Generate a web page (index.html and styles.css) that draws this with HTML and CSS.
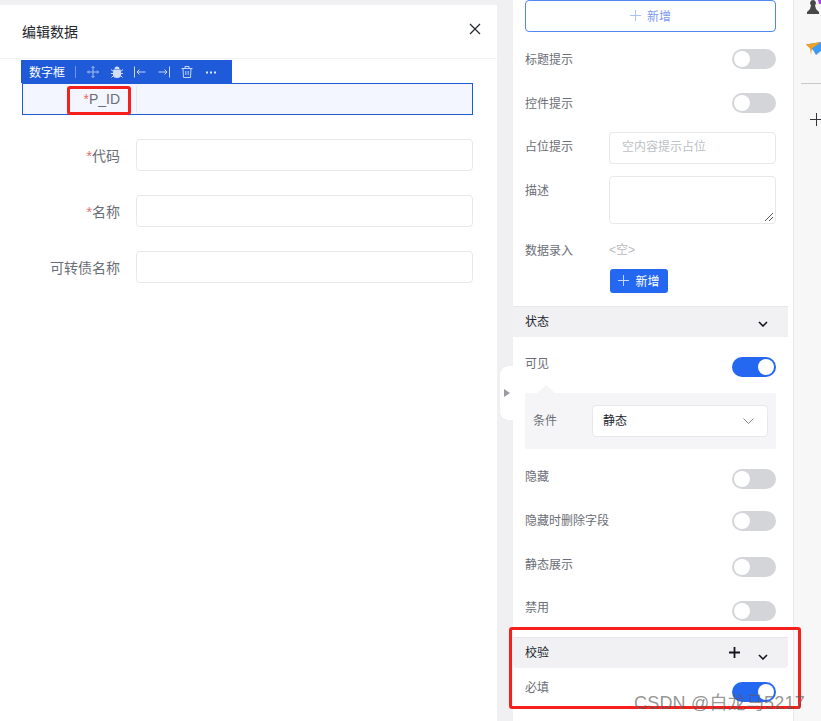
FILE: index.html
```html
<!DOCTYPE html>
<html lang="en">
<head>
    <meta charset="UTF-8">
    <title>编辑数据</title>
    <link rel="stylesheet" href="styles.css">
</head>
<body>
    <div class="dialog">
        <div class="dialog-head">
            <span class="dialog-title">编辑数据</span>
            <svg class="close" width="12" height="12" viewBox="0 0 12 12"><path d="M1 1l10 10M11 1L1 11" stroke="#22252c" stroke-width="1.2" fill="none"/></svg>
        </div>
        <div class="form">
            <div class="form-row selected">
                <div class="toolbar">
                    <span class="toolbar-name">数字框</span>
                    <span class="toolbar-sep"></span>
                    <svg width="12" height="12" viewBox="0 0 12 12"><path d="M6 .5v11M.5 6h11M4.500 2L6 .5 7.500 2M4.500 10L6 11.500 7.500 10M2 4.500L.5 6 2 7.500M10 4.500L11.500 6 10 7.500" stroke="#a9c0f0" fill="none"/></svg>
                    <svg width="12" height="12" viewBox="0 0 12 12"><path d="M3.500 3a2.500 2.500 0 0 1 5 0zM2.500 3.500h7l.5 2V9a4 3 0 0 1-8 0V5.500z" fill="#d3dff8"/><path d="M0 3.500l2.500 2M12 3.500l-2.500 2M0 7.500h2.500M12 7.500H9.500M.5 11.500L3 9M11.500 11.500L9 9" stroke="#d3dff8" fill="none"/></svg>
                    <svg width="12" height="12" viewBox="0 0 12 12"><path d="M.5 .5v11M11.500 6H3M5.500 3.500L3 6l2.500 2.500" stroke="#c5d5f5" fill="none"/></svg>
                    <svg width="12" height="12" viewBox="0 0 12 12"><path d="M11.500 .5v11M.5 6H9M6.500 3.500L9 6l-2.500 2.500" stroke="#c5d5f5" fill="none"/></svg>
                    <svg width="12" height="12" viewBox="0 0 12 12"><path d="M.5 2.500h11M4 2.500V.5h4v2M2 2.500l.5 9h7l.5-9M4.800 5v4M7.200 5v4" stroke="#c5d5f5" fill="none"/></svg>
                    <svg width="12" height="12" viewBox="0 0 12 12"><path d="M1 5.500h2v2H1zM5 5.500h2v2H5zM9 5.500h2v2H9z" fill="#dbe5fa"/></svg>
                </div>
                <label class="form-label"><span class="star">*</span>P_ID</label>
                <div class="form-input"></div>
            </div>
            <div class="form-row">
                <label class="form-label"><span class="star">*</span>代码</label>
                <div class="form-input"></div>
            </div>
            <div class="form-row">
                <label class="form-label"><span class="star">*</span>名称</label>
                <div class="form-input"></div>
            </div>
            <div class="form-row">
                <label class="form-label">可转债名称</label>
                <div class="form-input"></div>
            </div>
        </div>
    </div>

    <div class="panel">
        <div class="collapse-handle"></div>
        <button class="add-wide"><svg width="11" height="11" viewBox="0 0 11 11"><path d="M5.500 0v11M0 5.500h11" stroke="#a9c3f7" fill="none"/></svg>新增</button>

        <div class="row row-first"><span class="label level">标题提示</span><span class="switch"></span></div>
        <div class="row"><span class="label level">控件提示</span><span class="switch"></span></div>

        <div class="field field-input">
            <span class="label">占位提示</span>
            <div class="text-box">空内容提示占位</div>
        </div>
        <div class="field field-area">
            <span class="label">描述</span>
            <div class="text-area">
                <svg class="resize" width="8" height="8" viewBox="0 0 8 8"><path d="M0 8l8-8M4 8l4-4" stroke="#555" fill="none"/></svg>
            </div>
        </div>
        <div class="field field-data">
            <span class="label">数据录入</span>
            <span class="empty">&lt;空&gt;</span>
        </div>
        <button class="add-small"><svg width="11" height="11" viewBox="0 0 11 11"><path d="M5.500 0v11M0 5.500h11" stroke="#c8d9fb" fill="none"/></svg>新增</button>

        <div class="section-head">
            <span class="section-name">状态</span>
            <svg class="chev" width="10" height="6" viewBox="0 0 10 6"><path d="M1 1l4 4 4-4" stroke="#14161c" stroke-width="1.600" fill="none"/></svg>
        </div>

        <div class="row row-visible"><span class="label up">可见</span><span class="switch on"></span></div>
        <div class="condition">
            <span class="condition-label">条件</span>
            <div class="select">
                <span class="select-value">静态</span>
                <svg width="11" height="6" viewBox="0 0 11 6"><path d="M.5.5l5 5 5-5" stroke="#83868e" fill="none"/></svg>
            </div>
        </div>

        <div class="row row-hide"><span class="label">隐藏</span><span class="switch"></span></div>
        <div class="row row-tight"><span class="label slight">隐藏时删除字段</span><span class="switch"></span></div>
        <div class="row row-loose"><span class="label">静态展示</span><span class="switch"></span></div>
        <div class="row"><span class="label up">禁用</span><span class="switch"></span></div>

        <div class="section-head section-check">
            <span class="section-name">校验</span>
            <svg class="head-plus" width="11" height="11" viewBox="0 0 11 11"><path d="M5.500 0v11M0 5.500h11" stroke="#14161c" stroke-width="1.800" fill="none"/></svg>
            <svg class="chev chev-low" width="10" height="6" viewBox="0 0 10 6"><path d="M1 1l4 4 4-4" stroke="#14161c" stroke-width="1.600" fill="none"/></svg>
        </div>
        <div class="row row-required"><span class="label up-more">必填</span><span class="switch on"></span></div>
    </div>

    <div class="side">
        <svg class="side-pawn" width="15" height="14" viewBox="0 0 15 14"><path d="M7 0a3 3 0 0 1 2 5.200L10 9l3 3v2H1v-2l3-3 1-3.800A3 3 0 0 1 7 0z" fill="#48484a"/><path d="M12 0h3v4h-2z" fill="#b13cf0"/></svg>
        <svg class="side-plane" width="15" height="14" viewBox="0 0 15 14"><path d="M0 2.500L15 0v9l-5 4-3-5z" fill="#3d9bf3"/><path d="M0 2.500L15 0 6 6.500l-1 6-1-6z" fill="#f0a020"/></svg>
        <div class="side-line"></div>
        <svg class="side-plus" width="12" height="13" viewBox="0 0 12 13"><path d="M6.500 0v13M0 6.500h12" stroke="#33353a" fill="none"/></svg>
    </div>

    <div class="mark mark-label"></div>
    <div class="mark mark-section"></div>
    <div class="watermark">CSDN @白龙马5217</div>
</body>
</html>
```

FILE: styles.css
```css
* {
    box-sizing: border-box;
}
body {
    margin: 0;
    height: 721px;
    overflow: hidden;
    display: flex;
    background-color: #f0f0f2;
    color: #6a6d75;
    font-family: "Liberation Sans", "Noto Sans CJK SC", sans-serif;
    font-size: 12px;
}

/* left dialog */
.dialog {
    width: 497px;
    margin-top: 5px;
    background-color: #fff;
}
.dialog-head {
    height: 54px;
    padding: 0 16px 2px 22px;
    display: flex;
    align-items: center;
    justify-content: space-between;
    border-bottom: 1px solid #f3f3f4;
}
.dialog-title {
    font-size: 14px;
    color: #22252c;
}
.close {
    margin-bottom: 4px;
}
.form {
    padding: 24px 24px 0 22px;
    display: flex;
    flex-direction: column;
    gap: 24px;
}
.form-row {
    height: 32px;
    display: flex;
    align-items: center;
    position: relative;
}
.form-label {
    width: 98px;
    text-align: right;
    font-size: 14px;
    flex: none;
}
.star {
    color: #ee6a6a;
}
.form-input {
    flex: 1;
    height: 32px;
    margin-left: 16px;
    border: 1px solid #e8e8ea;
    border-radius: 4px;
}
.selected {
    border: 1px solid #1f5bd8;
    background-color: #f3f6fe;
}
.selected .form-label {
    width: 97px;
}
.selected .form-input {
    height: 30px;
    border-color: #e3e6ef;
    border-top: 0;
    border-bottom: 0;
    border-right: 0;
}
.toolbar {
    position: absolute;
    left: -2px;
    top: -24px;
    width: 211px;
    height: 23px;
    padding-left: 8px;
    display: flex;
    align-items: center;
    gap: 11.500px;
    background-color: #1f5bd8;
}
.toolbar-name {
    color: #fff;
}
.toolbar-sep {
    width: 1px;
    height: 12px;
    margin: 0 0 0 -2px;
    background-color: #6f95e6;
}

/* right panel */
.panel {
    width: 281px;
    margin-left: 16px;
    padding: 0 17px 0 12px;
    background-color: #fff;
    border-right: 1px solid #e8e8ea;
    position: relative;
    flex: none;
}
.collapse-handle {
    position: absolute;
    left: -13px;
    top: 366px;
    width: 13px;
    height: 54px;
    background-color: #fff;
    border-radius: 9px 0 0 9px;
}
.collapse-handle::after {
    content: "";
    position: absolute;
    left: 4px;
    top: 23px;
    border-left: 6px solid #9a9ca3;
    border-top: 4px solid transparent;
    border-bottom: 4px solid transparent;
}
button {
    font-family: inherit;
    font-size: 12px;
    padding: 0 0 1px;
    display: flex;
    align-items: center;
    justify-content: center;
    gap: 6px;
}
.add-wide {
    width: 251px;
    height: 32px;
    background-color: #fff;
    color: #7d9cf0;
    border: 1px solid #4f88f3;
    border-radius: 4px;
}
.add-small {
    width: 58px;
    height: 24px;
    margin: 9px 0 0 85px;
    background-color: #2468f2;
    color: #fff;
    border: 0;
    border-radius: 3px;
}
.row {
    height: 20px;
    margin-top: 24px;
    display: flex;
    align-items: center;
    justify-content: space-between;
}
.row-first {
    margin-top: 17px;
}
.row-visible {
    margin-top: 20px;
}
.row-hide {
    margin-top: 20px;
}
.row-tight {
    margin-top: 22px;
}
.row-loose {
    margin-top: 26px;
}
.row-required {
    margin-top: 14px;
}
.label {
    padding-bottom: 8px;
}
.level {
    padding-bottom: 2px;
}
.slight {
    padding-bottom: 4px;
}
.up {
    padding-bottom: 10px;
}
.up-more {
    padding-bottom: 12px;
}
.switch {
    width: 44px;
    height: 20px;
    padding: 2px;
    border-radius: 10px;
    background-color: #d4d5d9;
    display: flex;
}
.switch::after {
    content: "";
    width: 16px;
    height: 16px;
    border-radius: 50%;
    background-color: #fff;
}
.switch.on {
    background-color: #2468f2;
    justify-content: flex-end;
}
.field {
    display: flex;
}
.field .label {
    width: 84px;
    padding: 0;
    flex: none;
}
.field-input {
    margin-top: 19px;
    height: 32px;
    align-items: center;
}
.field-input .label {
    padding-bottom: 6px;
}
.text-box {
    width: 167px;
    height: 32px;
    padding-left: 12px;
    line-height: 28px;
    color: #bdbfc4;
    border: 1px solid #e8e8ea;
    border-radius: 4px;
}
.field-area {
    margin-top: 12px;
}
.field-area .label {
    padding-top: 5px;
}
.text-area {
    width: 167px;
    height: 48px;
    border: 1px solid #e8e8ea;
    border-radius: 4px;
    display: flex;
    align-items: flex-end;
    justify-content: flex-end;
    padding: 0 2px 2px 0;
}
.field-data {
    margin-top: 16px;
    height: 20px;
    align-items: center;
}
.field-data .label {
    padding-bottom: 2px;
}
.empty {
    color: #b9bbc1;
    padding-bottom: 4px;
}
.section-head {
    height: 31px;
    margin: 13px -12px 0;
    padding: 0 20px 1px 12px;
    display: flex;
    align-items: center;
    justify-content: space-between;
    background-color: #f1f1f3;
    border-top: 1px solid #e6e7ea;
    color: #22252c;
}
.section-name {
    padding-bottom: 2px;
}
.chev {
    margin-top: 5px;
}
.section-check {
    margin-top: 16px;
    justify-content: flex-start;
    border-radius: 0 0 4px 4px;
}
.head-plus {
    margin-left: auto;
}
.chev-low {
    margin: 8px 0 0 18px;
}
.condition {
    height: 56px;
    margin-top: 16px;
    padding: 0 8px;
    display: flex;
    align-items: center;
    background-color: #f5f5f7;
    border-radius: 2px;
    position: relative;
}
.condition::before {
    content: "";
    position: absolute;
    left: 12px;
    top: -8px;
    border-bottom: 8px solid #f5f5f7;
    border-left: 9px solid transparent;
    border-right: 9px solid transparent;
}
.condition-label {
    width: 59px;
    flex: none;
    padding-bottom: 4px;
}
.select {
    flex: 1;
    height: 32px;
    padding: 0 13px 0 10px;
    display: flex;
    align-items: center;
    justify-content: space-between;
    background-color: #fff;
    border: 1px solid #e8e8ea;
    border-radius: 4px;
    color: #22252c;
}
.select-value {
    padding-bottom: 4px;
}

/* right strip */
.side {
    flex: 1;
    background-color: #f7f7f7;
    padding-left: 7px;
    display: flex;
    flex-direction: column;
    overflow: hidden;
}
.side svg {
    flex: none;
}
.side-pawn {
    margin-left: 5px;
}
.side-plane {
    margin: 28px 0 0 5px;
}
.side-line {
    width: 30px;
    height: 1px;
    margin-top: 27px;
    background-color: #c8c8c8;
}
.side-plus {
    margin: 29px 0 0 9px;
}

/* red notes drawn over the shot */
.mark {
    position: absolute;
    border: 3px solid #f5201c;
    border-radius: 3px;
}
.mark-label {
    left: 67px;
    top: 86px;
    width: 64px;
    height: 29px;
}
.mark-section {
    left: 509px;
    top: 627px;
    width: 292px;
    height: 82px;
}
.watermark {
    position: absolute;
    left: 634px;
    top: 693px;
    font-size: 18px;
    letter-spacing: 0.2px;
    line-height: 20px;
    color: rgba(90, 90, 90, 0.65);
    white-space: nowrap;
}
```
